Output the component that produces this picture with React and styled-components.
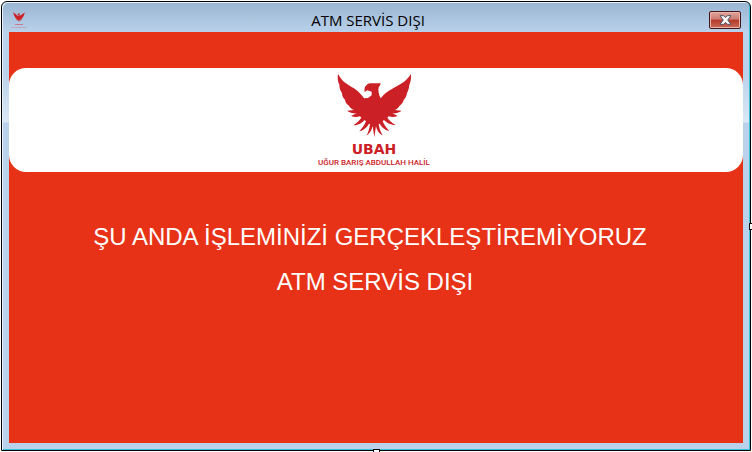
import React from "react";
import styled, { createGlobalStyle } from "styled-components";

const GlobalStyle = createGlobalStyle`
  * { box-sizing: border-box; }
  body { margin: 0; background: #fff; }
`;

const Desktop = styled.div`
  display: flex;
  min-height: 100vh;
  padding: 1px;
`;

const Window = styled.main`
  position: relative;
  flex: 1;
  display: flex;
  flex-direction: column;
  border: 1px solid #000;
  border-radius: 6px 6px 0 0;
  padding: 0 7px 7px 7px;
  background: linear-gradient(#9ab5d2, #b9d1ea 30px, #b9d1ea 70px, #dbe8f5 120px, #b9d1ea 121px);
  box-shadow: inset 1px 1px 0 #e8f1fa, inset -1px -1px 0 #35c3dc;
`;

const TitleBar = styled.header`
  display: grid;
  grid-template-columns: 16px 1fr 32px;
  align-items: center;
  height: 30px;
  padding: 5px 2px 0 2px;
`;

const Title = styled.h1`
  margin: 0;
  text-align: center;
  font: 400 15px/20px "Open Sans", "Noto Sans", sans-serif;
  color: #000;
`;

const AppIcon = styled.div`
  display: flex;
  flex-direction: column;
  align-items: center;
  gap: 2px;
  width: 16px;
`;

const IconLine = styled.span`
  width: ${(p) => p.$width};
  height: 1px;
  background: #d0717f;
  opacity: ${(p) => p.$opacity};
`;

const CloseButton = styled.button`
  display: grid;
  place-items: center;
  width: 32px;
  height: 18px;
  padding: 0;
  border: 1px solid #43161b;
  border-radius: 2px;
  background: linear-gradient(#dfa59d 0, #cd7b70 45%, #b43a2a 50%, #c96a58 100%);
  box-shadow: inset 0 0 0 1px #e7b5ac;
`;

const Screen = styled.section`
  flex: 1;
  padding-top: 36px;
  background: #e73218;
`;

const LogoPanel = styled.div`
  display: flex;
  flex-direction: column;
  align-items: center;
  height: 104px;
  padding: 5px 4px 0 0;
  border-radius: 17px;
  background: #fff;
  color: #cb2026;
`;

const BrandName = styled.strong`
  margin-top: 2px;
  font: 700 14px/18px "DejaVu Sans", sans-serif;
`;

const BrandMembers = styled.span`
  font: 500 8px/10px Roboto, sans-serif;
`;

const Notice = styled.div`
  display: flex;
  flex-direction: column;
  align-items: center;
  gap: 17px;
  padding-top: 51px;
`;

const NoticeLine = styled.p`
  margin: 0;
  padding-right: ${(p) => p.$inset || "0"};
  font: 400 24px/28px "Liberation Sans", Arial, sans-serif;
  color: #fff;
`;

const Handle = styled.span`
  position: absolute;
  border: 1px solid #000;
  background: #fff;
`;

const RightHandle = styled(Handle)`
  right: -4px;
  top: calc(50% - 3px);
  width: 5px;
  height: 7px;
`;

const BottomHandle = styled(Handle)`
  bottom: -4px;
  left: calc(50% - 3px);
  width: 7px;
  height: 5px;
`;

function Eagle({ width, height }) {
  return (
    <svg width={width} height={height} viewBox="21 15 225 195" aria-hidden="true">
      <path
        fill="#cb2026"
        d="M24 17 C34 39 53 50 72 61 C85 69 94 80 102 91
        L114 90 L125 82 L125 71 L112 67 L104 72 C102 63 104 56 110 51
        C114 47 119 46 126 46 L152 46 C152 50 149 54 146 58
        C144 68 146 80 152 91 C160 80 170 71 187 62
        C208 51 230 40 243 18 C244 31 242 42 238 51
        C237 61 235 68 231 75 C230 84 226 91 221 96
        C219 104 215 109 209 113 C205 120 200 124 194 126
        L215 128 C205 135 196 137 187 136 L203 144
        C193 148 184 147 176 145 L172 149
        C179 158 186 165 197 171 C183 172 170 164 162 156
        L158 160 C163 172 170 181 178 189
        C163 186 155 176 149 167 L146 168 C148 181 151 191 158 202
        C146 197 140 185 138 174 L133 208
        L128 174 C125 186 120 197 109 203
        C116 192 118 181 120 168 L117 167
        C111 177 103 186 88 190 C97 180 103 171 108 160
        L104 156 C96 164 85 173 70 172 C81 165 88 157 94 149
        L90 145 C82 147 73 148 63 144 L80 136
        C70 137 61 135 51 128 L72 126 C65 123 60 119 57 113
        C50 108 46 103 45 95 C39 90 36 83 36 75
        C31 68 28 59 28 50 C23 40 22 28 24 17 Z"
      />
    </svg>
  );
}

export default function App() {
  return (
    <>
      <GlobalStyle />
      <Desktop>
        <Window>
          <TitleBar>
            <AppIcon>
              <Eagle width={12} height={10} />
              <IconLine $width="8px" $opacity={0.9} />
              <IconLine $width="16px" $opacity={0.4} />
            </AppIcon>
            <Title>ATM SERVİS DIŞI</Title>
            <CloseButton type="button" aria-label="Kapat">
              <svg width="13" height="10" viewBox="0 0 13 10" aria-hidden="true">
                <path
                  d="M1 .7h3.6l1.9 2 1.9-2H12L8.7 5 12 9.3H8.4l-1.9-2-1.9 2H1L4.3 5z"
                  fill="#fff"
                  stroke="#4f5365"
                />
              </svg>
            </CloseButton>
          </TitleBar>
          <Screen>
            <LogoPanel>
              <Eagle width={75} height={65} />
              <BrandName>UBAH</BrandName>
              <BrandMembers>UĞUR BARIŞ ABDULLAH HALİL</BrandMembers>
            </LogoPanel>
            <Notice>
              <NoticeLine $inset="12px">ŞU ANDA İŞLEMİNİZİ GERÇEKLEŞTİREMİYORUZ</NoticeLine>
              <NoticeLine $inset="2px">ATM SERVİS DIŞI</NoticeLine>
            </Notice>
          </Screen>
          <RightHandle />
          <BottomHandle />
        </Window>
      </Desktop>
    </>
  );
}
